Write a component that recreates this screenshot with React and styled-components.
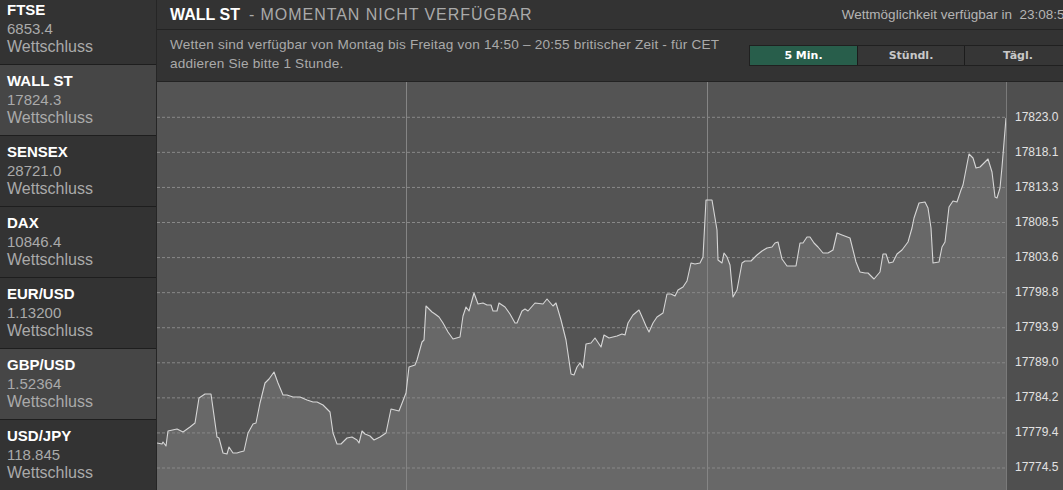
import React from "react";
import styled, { createGlobalStyle } from "styled-components";

const GlobalStyle = createGlobalStyle`
  html, body {
    margin: 0;
    padding: 0;
    background: #333333;
    overflow: hidden;
  }
  body {
    font-family: "Liberation Sans", Arial, Helvetica, sans-serif;
  }
`;

const MARKETS = [
  { name: "FTSE", value: "6853.4" },
  { name: "WALL ST", value: "17824.3", active: true },
  { name: "SENSEX", value: "28721.0" },
  { name: "DAX", value: "10846.4" },
  { name: "EUR/USD", value: "1.13200" },
  { name: "GBP/USD", value: "1.52364", active: true },
  { name: "USD/JPY", value: "118.845" },
];

const AXIS = [
  "17823.0", "17818.1", "17813.3", "17808.5", "17803.6", "17798.8",
  "17793.9", "17789.0", "17784.2", "17779.4", "17774.5",
];

// price line, page coordinates traced from the 5 min feed
const RAW = `157,443 162,444 163,442 166,446 168,431 177,429 183,432 190,427 195,423 199,398
205,394 211,394 217,437 219,438 223,453 227,454 229,447 233,453 237,453 240,452 244,451
248,433 253,424 256,423 260,403 265,383 269,379 274,372 278,383 283,395 287,395 293,397
300,397 307,400 313,402 317,402 323,405 330,412 333,433 337,444 341,444 347,438 352,437
357,440 359,443 362,431 365,434 370,436 374,440 380,437 386,433 391,409 399,411 406,393
409,367 415,365 417,360 422,342 424,340 426,306 432,312 435,314 439,317 443,323 448,332
453,339 460,337 463,316 466,307 469,311 474,293 478,304 483,303 487,305 491,305 493,311
497,311 499,303 505,307 510,314 515,323 517,323 522,311 525,309 528,311 535,303 543,304
547,299 553,306 556,303 561,320 566,340 571,374 574,375 577,367 580,363 583,368 586,344
591,343 595,338 601,347 604,335 609,338 617,336 622,334 625,335 628,323 633,315 639,310
643,319 646,326 649,332 653,323 657,317 663,313 667,294 671,294 675,296 678,290 683,287
687,281 691,263 695,264 700,263 703,257 706,200 712,200 717,230 718,260 722,263 724,253
727,257 730,265 733,297 737,290 742,263 745,261 751,261 757,255 762,251 767,248 772,247
775,243 778,242 782,259 787,266 796,266 800,243 803,243 807,237 810,237 814,243 818,247
823,253 828,253 833,250 837,233 842,235 850,238 856,262 860,272 865,273 868,273 874,279
880,272 883,254 886,254 889,263 893,262 897,254 902,250 908,242 912,228 914,218 919,203
925,202 928,208 931,228 933,263 939,262 942,247 945,242 949,207 953,201 957,202 961,190
963,185 969,154 973,158 976,168 980,167 988,159 992,172 995,197 997,198 1000,188 1002,167
1006,118`;

const PLOT_W = 849;
const PLOT_H = 408;
const GRID_TOP = 35.3;
const GRID_STEP = 35.07;

const points = RAW.trim()
  .split(/\s+/)
  .map((p) => p.split(",").map(Number))
  .map(([x, y]) => [x - 157, y - 82]);

const linePath = points.map(([x, y], i) => `${i ? "L" : "M"}${x},${y}`).join(" ");
const areaPath = `${linePath} L${PLOT_W},${PLOT_H} L0,${PLOT_H} Z`;

const Page = styled.div`
  display: flex;
  width: 1080px;
  height: 490px;
  overflow: hidden;
`;

const Sidebar = styled.div`
  width: 156px;
  flex-shrink: 0;
  border-right: 1px solid #262626;
  background: #333333;
`;

const MarketList = styled.ul`
  list-style: none;
  margin: -6px 0 0;
  padding: 0;
`;

const MarketRow = styled.li`
  box-sizing: border-box;
  height: 71px;
  padding: 7px 0 0 7px;
  border-bottom: 1px solid #1e1e1e;
  background: ${(p) => (p.$active ? "#464646" : "#333333")};
  line-height: 18.5px;
`;

const MarketName = styled.div`
  color: #ffffff;
  font-weight: bold;
  font-size: 15px;
`;

const MarketValue = styled.div`
  color: #aaaaaa;
  font-size: 15px;
`;

const MarketStatus = styled.div`
  color: #aaaaaa;
  font-size: 16px;
`;

const Main = styled.div`
  flex: 1;
  display: flex;
  flex-direction: column;
  min-width: 0;
`;

const TitleBar = styled.div`
  height: 29px;
  border-bottom: 1px solid #232323;
  display: flex;
  align-items: center;
  padding: 0 8px 0 13px;
  background: #333333;
`;

const Title = styled.h1`
  margin: 0;
  font-size: 16px;
  font-weight: bold;
  color: #ffffff;
  white-space: nowrap;
`;

const Subtitle = styled.span`
  font-weight: normal;
  color: #aaaaaa;
  margin-left: 9px;
  letter-spacing: 0.95px;
`;

const Countdown = styled.div`
  margin-left: auto;
  font-size: 13.5px;
  color: #b5b5b5;
  white-space: nowrap;
`;

const InfoBar = styled.div`
  height: 51px;
  border-bottom: 1px solid #232323;
  display: flex;
  align-items: center;
  padding: 0 8px 0 13px;
  background: #333333;
`;

const InfoText = styled.p`
  margin: 0;
  font-size: 13.6px;
  letter-spacing: 0.2px;
  line-height: 18.3px;
  color: #aaaaaa;
  padding-bottom: 2px;
`;

const Tabs = styled.div`
  display: flex;
  margin-left: auto;
  margin-top: -1px;
  border: 1px solid #202020;
`;

const Tab = styled.button`
  width: 107px;
  height: 19px;
  padding: 0;
  border: none;
  border-left: ${(p) => (p.$first ? "none" : "1px solid #1c1c1c")};
  background: ${(p) => (p.$active ? "#285e4b" : "#363636")};
  color: ${(p) => (p.$active ? "#ffffff" : "#c8c8c8")};
  font-family: "DejaVu Sans", Verdana, sans-serif;
  font-weight: bold;
  font-size: 11px;
  cursor: pointer;
`;

const ChartArea = styled.div`
  flex: 1;
  display: flex;
  min-height: 0;
`;

const Plot = styled.svg`
  display: block;
  width: ${PLOT_W}px;
  height: ${PLOT_H}px;
  flex-shrink: 0;
  background: #545454;
`;

const Axis = styled.div`
  flex: 1;
  border-left: 1px solid #7a7a7a;
  background: #4f4f4f;
  padding: ${GRID_TOP - GRID_STEP / 2}px 0 0 8px;
`;

const AxisLabel = styled.div`
  height: ${GRID_STEP}px;
  line-height: ${GRID_STEP}px;
  font-size: 12px;
  color: #e2e2e2;
`;

const Chart = () => (
  <ChartArea>
    <Plot viewBox={`0 0 ${PLOT_W} ${PLOT_H}`}>
      <path d={areaPath} fill="#686868" />
      {AXIS.map((_, i) => (
        <line
          key={i}
          x1="0"
          x2={PLOT_W}
          y1={GRID_TOP + i * GRID_STEP}
          y2={GRID_TOP + i * GRID_STEP}
          stroke="#888888"
          strokeWidth="1"
          strokeDasharray="3 2"
        />
      ))}
      <line x1="249.5" x2="249.5" y1="0" y2={PLOT_H} stroke="#858585" />
      <line x1="550.5" x2="550.5" y1="0" y2={PLOT_H} stroke="#858585" />
      <path d={linePath} fill="none" stroke="#d6d6d6" strokeWidth="1.1" strokeLinejoin="round" />
    </Plot>
    <Axis>
      {AXIS.map((v) => (
        <AxisLabel key={v}>{v}</AxisLabel>
      ))}
    </Axis>
  </ChartArea>
);

const App = () => (
  <>
    <GlobalStyle />
    <Page>
      <Sidebar>
        <MarketList>
          {MARKETS.map((m) => (
            <MarketRow key={m.name} $active={m.active}>
              <MarketName>{m.name}</MarketName>
              <MarketValue>{m.value}</MarketValue>
              <MarketStatus>Wettschluss</MarketStatus>
            </MarketRow>
          ))}
        </MarketList>
      </Sidebar>
      <Main>
        <TitleBar>
          <Title>
            WALL ST<Subtitle>- MOMENTAN NICHT VERFÜGBAR</Subtitle>
          </Title>
          <Countdown>Wettmöglichkeit verfügbar in&nbsp; 23:08:54</Countdown>
        </TitleBar>
        <InfoBar>
          <InfoText>
            Wetten sind verfügbar von Montag bis Freitag von 14:50 – 20:55 britischer Zeit - für CET
            <br />
            addieren Sie bitte 1 Stunde.
          </InfoText>
          <Tabs>
            <Tab $first $active>5 Min.</Tab>
            <Tab>Stündl.</Tab>
            <Tab>Tägl.</Tab>
          </Tabs>
        </InfoBar>
        <Chart />
      </Main>
    </Page>
  </>
);

export default App;
